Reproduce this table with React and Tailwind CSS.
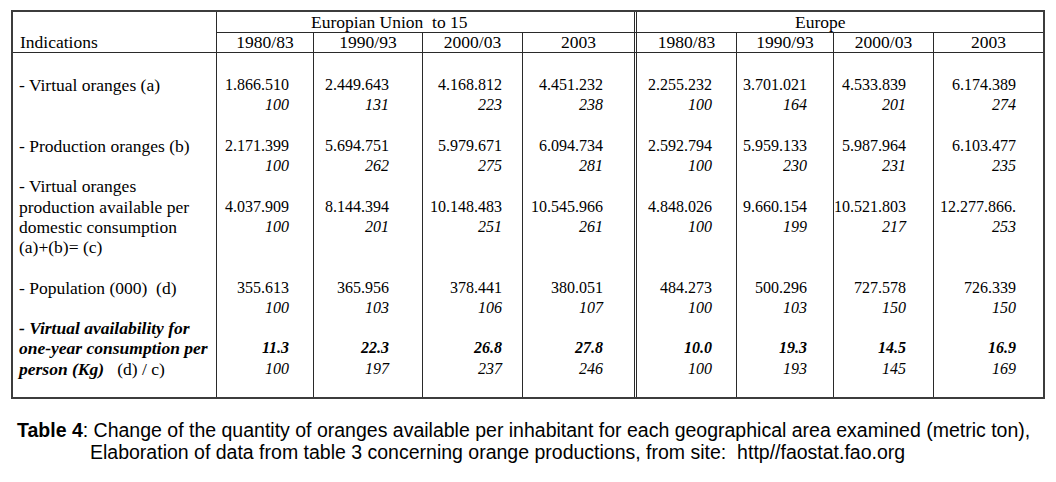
import React from "react";

const cols = [
  "pr-[24px]",
  "pr-[33px]",
  "pr-[20px]",
  "pr-[31px]",
  "pr-[24px]",
  "pr-[26px]",
  "pr-[27px]",
  "pr-[27px]",
];

const borders = [
  "border-l border-[#2a2a2a]",
  "border-l border-[#2a2a2a]",
  "border-l border-[#2a2a2a]",
  "border-l border-[#2a2a2a]",
  "border-l-[3px] border-double border-[#2a2a2a]",
  "border-l border-[#2a2a2a]",
  "border-l border-[#2a2a2a]",
  "border-l border-[#2a2a2a]",
];

const rows = [
  {
    label: [<span key="a">- Virtual oranges (a)</span>],
    cls: "pt-[22px] pb-[20.25px]",
    dataCls: "pt-[22px] pb-[20.25px]",
    values: [
      ["1.866.510", "100"],
      ["2.449.643", "131"],
      ["4.168.812", "223"],
      ["4.451.232", "238"],
      ["2.255.232", "100"],
      ["3.701.021", "164"],
      ["4.533.839", "201"],
      ["6.174.389", "274"],
    ],
  },
  {
    label: [<span key="a">- Production oranges (b)</span>],
    cls: "",
    dataCls: "",
    values: [
      ["2.171.399", "100"],
      ["5.694.751", "262"],
      ["5.979.671", "275"],
      ["6.094.734", "281"],
      ["2.592.794", "100"],
      ["5.959.133", "230"],
      ["5.987.964", "231"],
      ["6.103.477", "235"],
    ],
  },
  {
    label: [
      <span key="a">- Virtual oranges</span>,
      <span key="b">production available per</span>,
      <span key="c">domestic consumption</span>,
      <span key="d">(a)+(b)= (c)</span>,
    ],
    cls: "pb-[20.25px]",
    dataCls: "pt-[20.25px]",
    values: [
      ["4.037.909", "100"],
      ["8.144.394", "201"],
      ["10.148.483", "251"],
      ["10.545.966", "261"],
      ["4.848.026", "100"],
      ["9.660.154", "199"],
      ["10.521.803", "217"],
      ["12.277.866.", "253"],
    ],
  },
  {
    label: [<span key="a">- Population (000)&nbsp; (d)</span>],
    cls: "",
    dataCls: "",
    values: [
      ["355.613", "100"],
      ["365.956", "103"],
      ["378.441", "106"],
      ["380.051", "107"],
      ["484.273", "100"],
      ["500.296", "103"],
      ["727.578", "150"],
      ["726.339", "150"],
    ],
  },
  {
    label: [
      <span key="a" className="font-bold italic">- Virtual availability for</span>,
      <span key="b" className="font-bold italic">one-year consumption per</span>,
      <span key="c">
        <span className="font-bold italic">person (Kg)</span>&nbsp;&nbsp; (d) / c)
      </span>,
    ],
    cls: "pb-[18px]",
    dataCls: "pt-[20.25px] pb-[18px]",
    bold: true,
    values: [
      ["11.3", "100"],
      ["22.3", "197"],
      ["26.8", "237"],
      ["27.8", "246"],
      ["10.0", "100"],
      ["19.3", "193"],
      ["14.5", "145"],
      ["16.9", "169"],
    ],
  },
];

const years = ["1980/83", "1990/93", "2000/03", "2003"];

export default function App() {
  return (
    <div className="w-[1056px] h-[482px] bg-white text-black overflow-hidden">
      <div
        className="ml-[11px] mt-[10px] w-[1034px] border-2 border-[#3c3c3c] text-[17.5px] leading-[20.25px]"
        style={{ fontFamily: '"Liberation Serif", "Times New Roman", serif' }}
      >
        <div className="grid grid-cols-[203px_97px_109px_100px_112px_102px_97px_100px_110px]">
          <div className="row-span-2 border-b border-[#2a2a2a] flex items-end pl-[7px] leading-[20px]">
            Indications
          </div>
          <div className="col-span-4 h-[21px] border-l border-b border-[#2a2a2a] pl-[94px] leading-[20px]">
            Europian Union&nbsp; to 15
          </div>
          <div className="col-span-4 h-[21px] border-l-[3px] border-double border-b border-[#2a2a2a] pl-[158px] leading-[20px]">
            Europe
          </div>
          {[...years, ...years].map((y, i) => (
            <div
              key={i}
              className={`h-[20px] border-b text-center leading-[19px] ${borders[i]}`}
            >
              {y}
            </div>
          ))}

          {rows.map((r, ri) => (
            <React.Fragment key={ri}>
              <div className={`flex flex-col pl-[6px] ${r.cls}`}>{r.label}</div>
              {r.values.map(([v, idx], ci) => (
                <div
                  key={ci}
                  className={`flex flex-col items-end text-[16px] ${borders[ci]} ${cols[ci]} ${r.dataCls}`}
                >
                  <span className={r.bold ? "font-bold italic" : ""}>{v}</span>
                  <span className="italic">{idx}</span>
                </div>
              ))}
            </React.Fragment>
          ))}
        </div>
      </div>

      <div
        className="mt-[20px] text-[19.5px] leading-[22px]"
        style={{ fontFamily: '"Liberation Sans", Arial, sans-serif' }}
      >
        <div className="pl-[17px]">
          <span className="font-bold">Table 4</span>: Change of the quantity of oranges available per
          inhabitant for each geographical area examined (metric ton),
        </div>
        <div className="pl-[90px]">
          Elaboration of data from table 3 concerning orange productions, from site:&nbsp; http//faostat.fao.org
        </div>
      </div>
    </div>
  );
}
